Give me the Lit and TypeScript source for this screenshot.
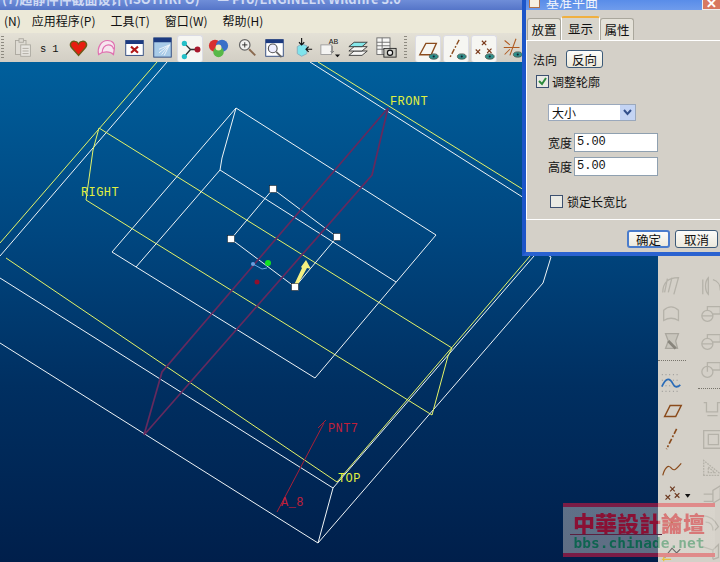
import { LitElement, html, css, svg } from 'lit';
import { customElement } from 'lit/decorators.js';

const dim = '#a9a69d';
const brown = '#8a4b1c';

const eye = svg`<ellipse cx="18" cy="20" rx="5" ry="3" fill="#2f8f8a" stroke="#4a5a50" stroke-width="1"/><circle cx="18" cy="20" r="1.2" fill="#123"/>`;

const topIcons = [
  svg`<g fill="#dedbd3" stroke="${dim}"><rect x="4" y="4" width="12" height="16"/><rect x="8" y="2" width="5" height="4"/><rect x="10" y="9" width="11" height="13" fill="#e8e6e0"/><path d="M12 13h7M12 16h7M12 19h7" fill="none"/></g>`,
  svg`<text x="0" y="17" class="tool-text">s</text><text x="14" y="17" class="tool-text">1</text>`,
  svg`<path d="M12 21 4 12c-3-4 0-8 4-7 2 0 3 1 4 3 1-2 2-3 4-3 4-1 7 3 4 7z" fill="#e81e10" stroke="#6d5a18" stroke-width="1.6"/>`,
  svg`<g fill="#f6e6ee" stroke="#e070b0" stroke-width="1.4"><path d="M3 20c-2-8 3-16 10-16s9 5 8 9l-1 7c-4-4-12-4-17 0z"/><path d="M7 18c0-5 3-9 7-9 3 0 6 2 6 5" fill="none"/></g>`,
  svg`<rect x="2" y="4" width="20" height="17" fill="#fff" stroke="#24407a"/><rect x="2" y="4" width="20" height="4" fill="#1c3a80"/><path d="M8 11l8 7M16 11l-8 7" stroke="#b01818" stroke-width="2.4"/>`,
  svg`<rect x="2" y="1" width="20" height="22" fill="#a9cbe8" stroke="#24407a"/><rect x="2" y="1" width="20" height="5" fill="#1c3a80"/><path d="M20 9 11 20M20 9l-12 5M20 9l-6 12M20 9 8 18" stroke="#f2f6fa" stroke-width="1"/>`,
  svg`<path d="M5 5 12 12 5 20M12 12h9" fill="none" stroke="#333" stroke-width="1.6"/><circle cx="5" cy="5" r="3" fill="#25c0c8"/><circle cx="5" cy="20" r="3" fill="#25c0c8"/><circle cx="20" cy="12" r="3.4" fill="#a8182c"/>`,
  svg`<circle cx="8" cy="10" r="7" fill="#d83030"/><circle cx="16" cy="10" r="7" fill="#3a70c8"/><circle cx="12" cy="17" r="6" fill="#58b848"/><circle cx="12" cy="12" r="3.4" fill="#f4ecb8"/>`,
  svg`<circle cx="10" cy="9" r="6" fill="#f2f2f0" stroke="#666" stroke-width="1.4"/><path d="M7 9h6M10 6v6" stroke="#222"/><path d="M15 14l7 7" stroke="#8a6a50" stroke-width="2.2"/>`,
  svg`<rect x="2" y="3" width="20" height="19" fill="#fff" stroke="#24407a"/><rect x="2" y="3" width="20" height="4" fill="#1c3a80"/><circle cx="10" cy="13" r="5" fill="#eef" stroke="#555" stroke-width="1.3"/><path d="M14 17l6 6" stroke="#666" stroke-width="2"/>`,
  svg`<path d="M6 11l5-3 6 2v9l-6 3-5-3z" fill="#7fe4ec" stroke="#8ab"/><path d="M11 1v8M8 6l3 3 3-3M23 14h-7M19 11l-3 3 3 3" fill="none" stroke="#111" stroke-width="1.3"/>`,
  svg`<rect x="1" y="9" width="12" height="11" fill="#f4f4f2" stroke="#999"/><text x="10" y="8" class="ab-text">AB</text><path d="M14 10v8M12 16l2 2 2-2" stroke="#777" fill="none"/><path d="M17 20h6l-3 3z" fill="#111"/>`,
  svg`<g stroke="#333" fill="#f6f6f4"><path d="M1 21l6-5h15l-6 5z"/><path d="M1 16l6-5h15l-6 5z"/><path d="M1 11l6-5h15l-6 5z" fill="#86e8ea"/></g>`,
  svg`<g fill="#f8f8f6" stroke="#666"><rect x="1" y="1" width="15" height="19"/><path d="M1 6h15M1 10h15M1 14h15M7 1v19" fill="none"/></g><rect x="9" y="13" width="14" height="10" fill="#c8c8c0" stroke="#222"/><circle cx="16" cy="18" r="3" fill="#eee" stroke="#111" stroke-width="1.3"/>`,
];

const datumIcons = [
  svg`<path d="M2 18 9 5h12l-6 13z" fill="none" stroke="${brown}" stroke-width="1.5"/>${eye}`,
  svg`<path d="M15 1 4 22" stroke="${brown}" stroke-width="1.6" stroke-dasharray="6 2 2 2" fill="none"/>${eye}`,
  svg`<path d="M9 2l5 5M14 2 9 7M2 12l5 5M7 12l-5 5M15 11l5 5M20 11l-5 5" stroke="#7a3a1c" stroke-width="1.3"/>${eye}`,
  svg`<path d="M3 4l6 5M16 2 9 21M2 12h18M3 20l6-6" stroke="#b05a20" stroke-width="1.2" fill="none"/>${eye}`,
];

const grey = (d: string) => svg`<path d="${d}" fill="none" stroke="#b5b2a9" stroke-width="1.4"/>`;
const dial = (d: string) =>
  svg`<circle cx="8" cy="15" r="6" fill="none" stroke="#b5b2a9" stroke-width="1.4"/>${grey(d)}`;

const sideLeft = [
  grey('M6 6l4 4M10 6l-4 4M12 6l4 4M16 6l-4 4M18 6l4 4M22 6l-4 4'),
  grey('M3 20C3 10 8 4 20 4l-5 18M8 5l-3 15M13 4 9 20'),
  grey('M4 20V9c5-5 11-5 16 0v11c-5-3-11-3-16 0z'),
  svg`<path d="M6 4h14l-3 8 2 8H6l3-8z" fill="#c8c5bc" stroke="#aaa79e" stroke-width="1.4"/><path d="M9 12l8 8" stroke="#88857c" stroke-width="3"/>`,
  null,
  svg`<path d="M2 4h20M2 10h20M2 16h20M2 22h20" stroke="#888" stroke-dasharray="1 3"/><path d="M2 17c5-11 9-9 12-3 2 4 5 4 8 1" fill="none" stroke="#2a6cb8" stroke-width="1.8"/>`,
  svg`<path d="M5 19 11 7h12l-6 12z" fill="none" stroke="${brown}" stroke-width="1.6"/>`,
  svg`<path d="M18 2 7 24" stroke="${brown}" stroke-width="1.8" stroke-dasharray="6 2 2 2" fill="none"/>`,
  svg`<path d="M3 22c2-8 6-12 9-8s5 2 11-5" fill="none" stroke="${brown}" stroke-width="1.3"/>`,
  svg`<path d="M11 4l5 5M16 4l-5 5M6 13l5 5M11 13l-5 5M16 11l5 5M21 11l-5 5" stroke="#6d3a20" stroke-width="1.3"/><path d="M27 12h6l-3 4z" fill="#111"/>`,
  svg`<path d="M6 4l14 16M18 3 7 21M3 13h20" stroke="#c43c22" stroke-width="1.3"/>`,
  svg`<path d="M5 20 13 10l5 5 4-4" fill="none" stroke="#333" stroke-width="1.2"/><path d="M4 16v8M2 22h10" stroke="#e8c040" stroke-width="1.4"/>`,
];

const sideRight = [
  grey('M3 2h22v6H3z'),
  grey('M3 6v16M9 4v18c-4-4-4-14 0-18zM14 6c5 1 8 6 8 12'),
  dial('M8 9V5h14v8H14M2 15h12'),
  dial('M8 9V5h14v8H14M2 15h12'),
  dial('M8 9V5h14v8H14M8 9v6'),
  null,
  grey('M4 4h3v10h12V4h4M8 18h11'),
  grey('M4 4h20v19H4zM9 8h11v11H9z'),
  svg`<path d="M4 22V6l20 16zM9 19v-6l7 6z" fill="none" stroke="#b5b2a9" stroke-width="1.4" stroke-dasharray="2 1"/>`,
  grey('M4 20h10V8l8-5v14l-8 5M4 12h10'),
  grey('M2 5c8 0 14 4 18 12l-4 4M6 12c6 0 8 4 8 9'),
  grey('M2 8l12 4 6-6v14l-6 2M14 12v10'),
];

@customElement('app-root')
export class AppRoot extends LitElement {
  static styles = css`
    :host {
      display: block;
      position: relative;
      width: 720px;
      height: 562px;
      overflow: hidden;
      font-family: "Noto Sans CJK SC", "Liberation Sans", sans-serif;
      font-size: 12px;
      color: #111;
      background: #d4d0c8;
    }
    .page { display: flex; flex-direction: column; height: 100%; }
    .title {
      height: 10px;
      flex: none;
      overflow: hidden;
      background: linear-gradient(#6f8ed8, #5575c8);
      color: #cfdaf4;
      font-size: 13px;
      font-weight: 700;
      white-space: pre;
      padding-left: 2px;
    }
    .title span { display: block; margin-top: -8px; line-height: 14px; }
    .menu {
      height: 23px;
      flex: none;
      background: #ece9d8;
      display: flex;
      align-items: center;
      gap: 15px;
      padding: 0 0 2px 4px;
      box-sizing: border-box;
      font-size: 12px;
      white-space: nowrap;
    }
    .menu span:first-child { margin-right: -4px; }
    .toolbar {
      height: 29px;
      flex: none;
      display: flex;
      align-items: center;
      background: linear-gradient(#e4e1d6, #d2cec4);
      box-sizing: border-box;
    }
    .grip {
      width: 3px;
      height: 24px;
      margin: 0 1px;
      background: repeating-linear-gradient(#8d8a80 0 1px, transparent 1px 3px);
    }
    .grip.first { margin-right: 4px; }
    .grip.mid { margin: 0 7px 0 4px; }
    .tool {
      width: 28px;
      height: 27px;
      display: flex;
      align-items: center;
      justify-content: center;
      box-sizing: border-box;
      flex: none;
    }
    .tool.on {
      width: 26px;
      margin: 2px 1px 0;
      background: #f6f6f2;
      border-radius: 3px;
      border: 1px solid #dcdce4;
      border-bottom: 0;
    }
    .tool svg { width: 21px; height: 21px; overflow: visible; }
    .tool-text { font: 12px "Liberation Mono", monospace; fill: #111; }
    .ab-text { font: 9px "Liberation Mono", monospace; fill: #222; }
    .main { flex: 1; display: flex; min-height: 0; }
    .view {
      flex: 1;
      min-width: 0;
      background: linear-gradient(#005f9c 0%, #00467f 35%, #002f61 65%, #001f4b 100%);
    }
    .view svg { display: block; width: 100%; height: 100%; }
    .white { stroke: #eef4f6; }
    .yellow { stroke: #e4f468; }
    .red { stroke: #652a5e; stroke-width: 1.7; }
    .bright { stroke: #a82038; }
    .lines { fill: none; stroke-width: 1; }
    .label { font: 12px "Liberation Mono", monospace; letter-spacing: 0.4px; }
    .label.y { fill: #e0f040; }
    .label.r { fill: #c0203a; }
    .side {
      width: 62px;
      flex: none;
      display: grid;
      grid-template-columns: 28px 34px;
      padding-top: 182px;
      box-sizing: border-box;
      background: #d4d0c8;
    }
    .col { display: flex; flex-direction: column; align-items: center; min-width: 0; }
    .col.r { padding-left: 18px; }
    .slot { height: 28px; width: 26px; display: flex; align-items: center; justify-content: center; flex: none; }
    .slot svg { width: 24px; height: 24px; overflow: visible; flex: none; }
    .dots { height: 8px; width: 28px; flex: none; border-top: 1px dotted #77746b; margin-top: 4px; }
    .dialog {
      position: absolute;
      left: 522px;
      top: -14px;
      width: 198px;
      height: 270px;
      box-sizing: border-box;
      background: #d4d0c8;
      border-left: 4px solid #1c55c8;
      border-bottom: 4px solid #2a62d0;
      display: flex;
      flex-direction: column;
    }
    .dlg-title {
      height: 23px;
      flex: none;
      background: linear-gradient(#3a78e4, #6f9cec);
      color: #f4f6fc;
      display: flex;
      align-items: flex-end;
      gap: 6px;
      padding: 0 0 1px 3px;
      font-size: 13px;
      line-height: 14px;
      position: relative;
    }
    .dlg-icon { width: 11px; height: 13px; background: #f6efe2; border: 1px solid #b0704a; box-sizing: border-box; margin-bottom: 1px; }
    .close {
      position: absolute;
      right: 0;
      bottom: 0;
      width: 18px;
      height: 14px;
      background: #d87860;
      color: #fff;
      font: 700 13px/13px "Liberation Sans", sans-serif;
      text-align: center;
      border: 1px solid #eee;
      border-right: 0;
      box-sizing: border-box;
    }
    .tabs { display: flex; height: 23px; padding: 7px 0 0 1px; flex: none; align-items: flex-end; }
    .tab {
      height: 22px;
      width: 34px;
      box-sizing: border-box;
      text-align: center;
      line-height: 21px;
      background: #e4e1d8;
      border: 1px solid #aaa79c;
      border-bottom: 0;
      border-radius: 3px 3px 0 0;
      font-size: 12.5px;
      white-space: nowrap;
      flex: none;
    }
    .tab.on {
      width: 39px;
      height: 24px;
      background: #d8d5cc;
      border-top: 2px solid #f0b040;
      border-color: #f0b040 #fff #d8d5cc #fff;
    }
    .panel {
      height: 180px;
      flex: none;
      box-sizing: border-box;
      border-top: 1px solid #fff;
      border-left: 1px solid #fff;
      border-bottom: 1px solid #fff;
      padding: 9px 0 0 6px;
      display: flex;
      flex-direction: column;
    }
    .row { display: flex; align-items: center; }
    .btn {
      box-sizing: border-box;
      background: linear-gradient(#fcfcfa, #ece9dc);
      border: 1px solid #3c5a78;
      border-radius: 3px;
      display: flex;
      align-items: center;
      justify-content: center;
      font-size: 12.5px;
    }
    .reverse { width: 37px; height: 18px; margin-left: 9px; }
    .check {
      width: 13px;
      height: 13px;
      box-sizing: border-box;
      border: 1px solid #3c5070;
      background: #eaeae4;
      display: flex;
      align-items: center;
      justify-content: center;
    }
    .check svg { width: 11px; height: 11px; }
    .normal-row { height: 18px; }
    .outline-row { margin: 6px 0 0 3px; gap: 3px; height: 14px; }
    .select {
      margin: 16px 0 0 15px;
      width: 88px;
      height: 17px;
      box-sizing: border-box;
      background: #fff;
      border: 1px solid #9aa8bc;
      display: flex;
      align-items: center;
      justify-content: space-between;
      padding-left: 3px;
    }
    .select b {
      width: 15px;
      height: 15px;
      background: #c4d4f4;
      display: flex;
      align-items: center;
      justify-content: center;
    }
    .select svg { width: 9px; height: 7px; }
    .field-rows { margin: 12px 0 0 15px; display: flex; flex-direction: column; gap: 5px; }
    .field { display: flex; align-items: center; gap: 2px; }
    .input {
      width: 84px;
      height: 19px;
      box-sizing: border-box;
      background: #fff;
      border: 1px solid #8fa0b0;
      font: 12px/17px "Liberation Mono", monospace;
      padding-left: 2px;
    }
    .lock-row { margin: 17px 0 0 17px; gap: 4px; }
    .footer { flex: 1; display: flex; justify-content: flex-end; gap: 5px; padding: 10px 2px 0 0; }
    .footer .btn { width: 43px; height: 18px; }
    .footer .btn.primary { border: 2px solid #4a7ccc; }
    /* forum watermark: the colours change where it crosses the toolbar edge at 95px */
    .mark {
      position: absolute;
      left: 563px;
      top: 503px;
      width: 152px;
      height: 54px;
      display: flex;
      flex-direction: column;
      align-items: center;
      background: linear-gradient(90deg, rgba(210, 205, 200, 0.45) 0 95px, rgba(226, 222, 214, 0.3) 95px);
      white-space: nowrap;
    }
    .band {
      align-self: stretch;
      height: 4px;
      flex: none;
      background: linear-gradient(90deg, #7a1c46 0 95px, #e08a8a 95px);
    }
    .rule { align-self: flex-start; width: 92px; height: 1px; margin-left: 7px; background: #5a2040; flex: none; }
    .mark .cn, .mark .en {
      align-self: stretch;
      text-align: center;
      -webkit-background-clip: text;
      background-clip: text;
      color: transparent;
    }
    .mark .cn {
      background-image: linear-gradient(90deg, #8a1034 0 95px, #d87878 95px);
      font: 900 22px/24px "Noto Sans CJK TC", sans-serif;
      margin-top: 3px;
    }
    .mark .en {
      background-image: linear-gradient(90deg, #0e6450 0 95px, #80b090 95px);
      font: 700 14.5px/17px "DejaVu Sans Mono", monospace;
      flex: 1;
    }
  `;

  private tool(icon: unknown, on = false) {
    return html`<div class="tool ${on ? 'on' : ''}"><svg viewBox="0 0 24 24">${icon}</svg></div>`;
  }

  private sideCol(items: unknown[], cls: string) {
    return html`<div class="col ${cls}">
      ${items.map((it) =>
        it === null
          ? html`<div class="dots"></div>`
          : html`<div class="slot"><svg viewBox="0 0 26 26">${it}</svg></div>`
      )}
    </div>`;
  }

  private scene() {
    return svg`
      <g class="lines">
        <!-- top plane -->
        <path class="white" d="M0 256 167 62M310 62 524 198M0 278 333 488 318 543 0 343M333 488 534 256M318 543 543 283 551 257 522 240"/>
        <path class="yellow" d="M0 243 157 62M318 62 524 190M6 258 337 482 530 256"/>
        <!-- right plane -->
        <path class="yellow" d="M99 128 452 348 448 356 432 415 86 200 93 150Z"/>
        <!-- inner box -->
        <path class="white" d="M236 108 436 235 315 378 112 252ZM236 108 222 158 220 170 396 282M220 170 136 267"/>
        <path class="white" d="M273 189 337 237 295 287 231 239Z"/>
        <!-- front plane -->
        <path class="red" d="M388 108 372 175 144 435 162 372Z"/>
        <path class="bright" d="M324 423 277 512M318 428l8-8"/>
        <path d="M253 264l9 5 5-1" stroke="#6aa4e0"/>
      </g>
      <path d="M294 285 302 268 301 267 306 260 311 269 307 268 297 286z" fill="#f4f080"/>
      <circle cx="268" cy="263" r="3" fill="#10e020"/>
      <circle cx="253" cy="264" r="2" fill="#6aa0e0"/>
      <circle cx="257" cy="282" r="2.5" fill="#90102c"/>
      ${[[273, 189], [231, 239], [337, 237], [295, 287]].map(
        ([x, y]) => svg`<rect x="${x - 3.5}" y="${y - 3.5}" width="7" height="7" fill="#fff" stroke="#111" stroke-width="0.5"/>`
      )}
      <text class="label y" x="390" y="105">FRONT</text>
      <text class="label y" x="81" y="196">RIGHT</text>
      <text class="label y" x="338" y="482">TOP</text>
      <text class="label r" x="328" y="432">PNT7</text>
      <text class="label r" x="281" y="506">A_8</text>
    `;
  }

  render() {
    return html`
      <div class="page">
        <div class="title"><span>(7)超静件件截面设计(ISOTHRFO)      — Pro/ENGINEER Wildfire 3.0</span></div>
        <div class="menu">
          <span>(N)</span><span>应用程序(P)</span><span>工具(T)</span><span>窗口(W)</span><span>帮助(H)</span>
        </div>
        <div class="toolbar">
          <div class="grip first"></div>
          ${topIcons.map((ic, i) => this.tool(ic, i === 6))}
          <div class="grip mid"></div>
          ${datumIcons.map((ic, i) => this.tool(ic, i < 3))}
        </div>
        <div class="main">
          <div class="view">
            <svg viewBox="0 62 658 500">${this.scene()}</svg>
          </div>
          <div class="side">
            ${this.sideCol(sideLeft, 'l')}
            ${this.sideCol(sideRight, 'r')}
          </div>
        </div>
      </div>

      <div class="dialog">
        <div class="dlg-title"><span class="dlg-icon"></span>基准平面<span class="close">✕</span></div>
        <div class="tabs">
          <div class="tab">放置</div>
          <div class="tab on">显示</div>
          <div class="tab">属性</div>
        </div>
        <div class="panel">
          <div class="row normal-row">法向<div class="btn reverse">反向</div></div>
          <div class="row outline-row">
            <span class="check"><svg viewBox="0 0 11 11"><path d="M2 5l3 3 4-6" fill="none" stroke="#2c8a3c" stroke-width="2"/></svg></span>调整轮廓
          </div>
          <div class="select">大小<b><svg viewBox="0 0 9 7"><path d="M1 1l3.5 4L8 1" fill="none" stroke="#33508c" stroke-width="2"/></svg></b></div>
          <div class="field-rows">
            <div class="field">宽度<div class="input">5.00</div></div>
            <div class="field">高度<div class="input">5.00</div></div>
          </div>
          <div class="row lock-row"><span class="check"></span>锁定长宽比</div>
        </div>
        <div class="footer">
          <div class="btn primary">确定</div>
          <div class="btn">取消</div>
        </div>
      </div>

      <div class="mark">
        <div class="band"></div>
        <div class="cn">中華設計論壇</div>
        <div class="rule"></div>
        <div class="en">bbs.chinade.net</div>
        <div class="band"></div>
      </div>
    `;
  }
}
